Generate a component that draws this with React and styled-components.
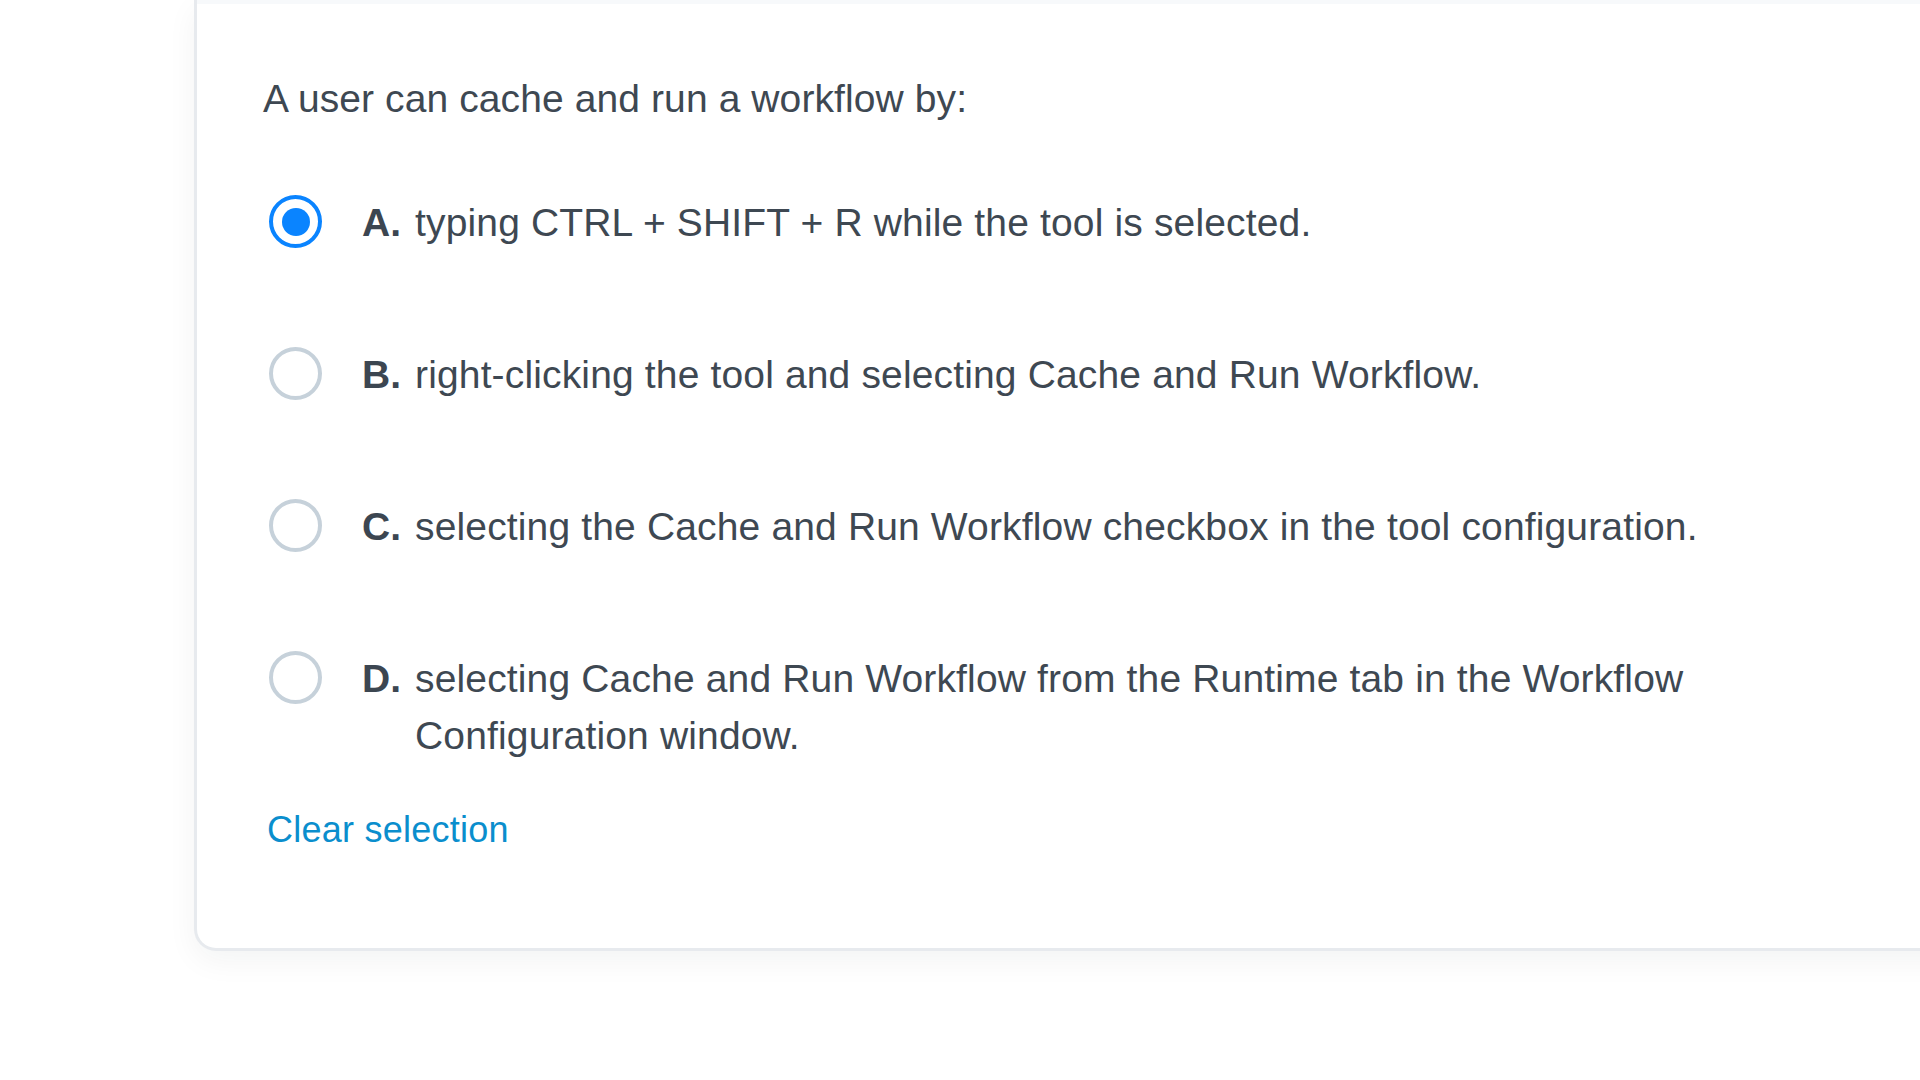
import React, { Component } from "react";
import styled, { createGlobalStyle } from "styled-components";

const GlobalStyle = createGlobalStyle`
  html, body {
    margin: 0;
    padding: 0;
    background: #fff;
    overflow: hidden;
  }
  body {
    font-family: "Liberation Sans", Arial, sans-serif;
    color: #3e4852;
  }
`;

const Page = styled.div`
  width: 1920px;
  height: 1080px;
  padding-left: 194px;
  box-sizing: border-box;
`;

const Card = styled.section`
  width: 1800px;
  background: #fff;
  border: 3px solid #e7eaee;
  border-top: none;
  border-radius: 0 0 22px 22px;
  box-shadow: 0 10px 30px rgba(20, 30, 45, 0.05);
`;

const TopStrip = styled.div`
  height: 4px;
  background: #f7f9fb;
`;

const Body = styled.div`
  padding: 66px 66px 92px 66px;
`;

const Question = styled.p`
  margin: 0;
  font-size: 39px;
  line-height: 57px;
  letter-spacing: 0.1px;
  color: #3e4852;
`;

const OptionList = styled.div`
  display: flex;
  flex-direction: column;
  gap: 95px;
  margin-top: 67px;
  padding-left: 6px;
`;

const Option = styled.label`
  display: flex;
  align-items: flex-start;
  cursor: pointer;
`;

const Radio = styled.span`
  width: 53px;
  height: 53px;
  box-sizing: border-box;
  border-radius: 50%;
  border: 4px solid ${(p) => (p.checked ? "#0a84ff" : "#c6d1da")};
  display: flex;
  align-items: center;
  justify-content: center;
  flex-shrink: 0;
  margin-right: 40px;
  margin-top: 1px;
`;

const Dot = styled.span`
  width: 28px;
  height: 28px;
  border-radius: 50%;
  background: #0a84ff;
`;

const Letter = styled.span`
  width: 53px;
  flex-shrink: 0;
  font-size: 39px;
  line-height: 57px;
  font-weight: 700;
  color: #3c4651;
`;

const OptionText = styled.span`
  max-width: 1310px;
  font-size: 39px;
  line-height: 57px;
  letter-spacing: 0.15px;
  color: #3e4852;
`;

const ClearLink = styled.a`
  display: inline-block;
  margin-top: 40px;
  margin-left: 4px;
  font-size: 36px;
  line-height: 52px;
  letter-spacing: 0.25px;
  color: #0a8ecd;
  text-decoration: none;
  cursor: pointer;
`;

const options = [
  { key: "A", text: "typing CTRL + SHIFT + R while the tool is selected." },
  {
    key: "B",
    text: "right-clicking the tool and selecting Cache and Run Workflow.",
  },
  {
    key: "C",
    text: "selecting the Cache and Run Workflow checkbox in the tool configuration.",
  },
  {
    key: "D",
    text: "selecting Cache and Run Workflow from the Runtime tab in the Workflow Configuration window.",
  },
];

export default class App extends Component {
  constructor(props) {
    super(props);
    this.state = { selected: "A" };
  }

  render() {
    return (
      <Page>
        <GlobalStyle />
        <Card>
          <TopStrip />
          <Body>
            <Question>A user can cache and run a workflow by:</Question>
            <OptionList>
              {options.map((o) => (
                <Option key={o.key} onClick={() => this.setState({ selected: o.key })}>
                  <Radio checked={this.state.selected === o.key}>
                    {this.state.selected === o.key && <Dot />}
                  </Radio>
                  <Letter>{o.key}.</Letter>
                  <OptionText>{o.text}</OptionText>
                </Option>
              ))}
            </OptionList>
            <ClearLink onClick={() => this.setState({ selected: null })}>
              Clear selection
            </ClearLink>
          </Body>
        </Card>
      </Page>
    );
  }
}
